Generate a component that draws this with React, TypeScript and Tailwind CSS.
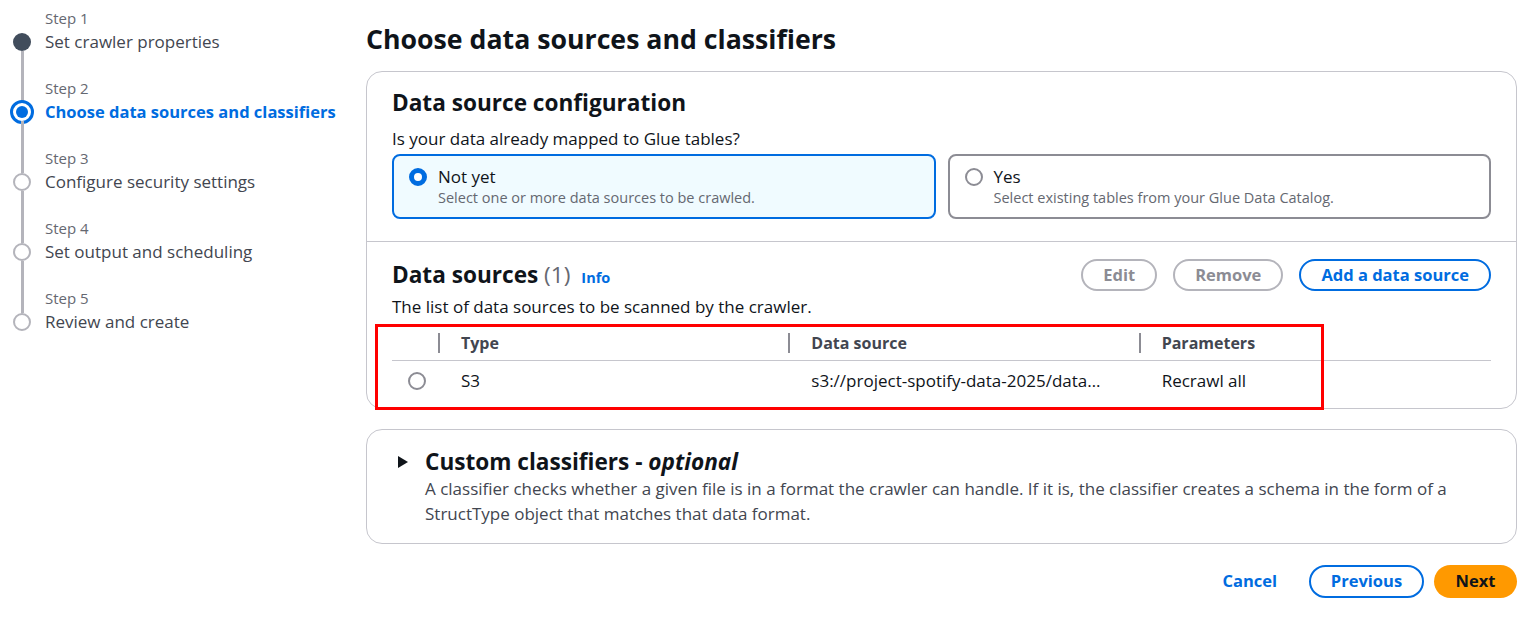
import React from "react";

const STEPS = [
  { label: "Step 1", title: "Set crawler properties", state: "done" },
  { label: "Step 2", title: "Choose data sources and classifiers", state: "active" },
  { label: "Step 3", title: "Configure security settings", state: "todo" },
  { label: "Step 4", title: "Set output and scheduling", state: "todo" },
  { label: "Step 5", title: "Review and create", state: "todo" },
];

function StepDot({ state }: { state: string }) {
  if (state === "done") return <div className="h-[18px] w-[18px] shrink-0 rounded-full bg-[#414d5c]" />;
  if (state === "active")
    return (
      <div className="flex h-6 w-6 shrink-0 items-center justify-center rounded-full border-[3px] border-[#006ce0] bg-white">
        <div className="h-3 w-3 rounded-full bg-[#006ce0]" />
      </div>
    );
  return <div className="h-[18px] w-[18px] shrink-0 rounded-full border-2 border-[#b4b4bb] bg-white" />;
}

function Nav() {
  return (
    <nav className="w-[366px] shrink-0 pl-[13px] pt-2">
      {STEPS.map((s, i) => (
        <div key={s.label} className="flex">
          <div className="flex w-[18px] shrink-0 flex-col items-center">
            <div className={`h-[25px] w-[3px] ${i === 0 ? "" : "bg-[#b4b4bb]"}`} />
            <div className="flex h-[18px] w-[18px] items-center justify-center">
              <StepDot state={s.state} />
            </div>
            <div className={`w-[3px] flex-1 ${i === STEPS.length - 1 ? "" : "bg-[#b4b4bb]"}`} />
          </div>
          <div className="pb-6 pl-[14px]">
            <div className="text-[15px] leading-5 text-[#656871]">{s.label}</div>
            <div
              className={`mt-[2px] leading-6 ${
                s.state === "active"
                  ? "text-[16.5px] font-bold text-[#006ce0]"
                  : "text-[17px] text-[#424650]"
              }`}
            >
              {s.title}
            </div>
          </div>
        </div>
      ))}
    </nav>
  );
}

function Radio({ checked }: { checked?: boolean }) {
  return checked ? (
    <div className="h-[18px] w-[18px] shrink-0 rounded-full border-[5px] border-[#006ce0] bg-white" />
  ) : (
    <div className="h-[18px] w-[18px] shrink-0 rounded-full border-2 border-[#8c8c94] bg-white" />
  );
}

function Tile({ checked, label, desc }: { checked?: boolean; label: string; desc: string }) {
  return (
    <div
      className={`flex gap-[11px] rounded-lg border-2 pb-[9px] pl-[15px] pr-4 pt-[10px] ${
        checked ? "border-[#006ce0] bg-[#f0fbff]" : "border-[#8c8c94] bg-white"
      }`}
    >
      <div className="pt-[2px]">
        <Radio checked={checked} />
      </div>
      <div>
        <div className="text-[17px] leading-[22px] text-[#0f141a]">{label}</div>
        <div className="text-[14.5px] leading-5 text-[#656871]">{desc}</div>
      </div>
    </div>
  );
}

function PillButton({ children, variant }: { children: React.ReactNode; variant: "disabled" | "normal" }) {
  return (
    <button
      className={`h-8 rounded-full border-2 px-5 text-[16.5px] font-bold leading-none ${
        variant === "disabled"
          ? "border-[#b4b4bb] text-[#8c8c94]"
          : "border-[#006ce0] text-[#006ce0]"
      }`}
    >
      {children}
    </button>
  );
}

export default function App() {
  return (
    <div
      className="min-h-screen bg-white text-[#0f141a]"
      style={{ fontFamily: "'Open Sans', 'Noto Sans', sans-serif" }}
    >
      <div className="flex">
        <Nav />

        <main className="flex-1 pr-4 pt-[21px]">
          <h1 className="text-[26.7px] font-bold leading-9 text-[#0f141a]">
            Choose data sources and classifiers
          </h1>

          <div className="relative mt-[14px] rounded-2xl border border-[#c6c6cd] bg-white">
            <div className="px-[25px] pb-[22px] pt-[17px]">
              <h2 className="text-[22.6px] font-bold leading-7">Data source configuration</h2>
              <p className="mt-[11px] text-[17px] leading-[22px]">Is your data already mapped to Glue tables?</p>
              <div className="mt-1 grid grid-cols-2 gap-3">
                <Tile checked label="Not yet" desc="Select one or more data sources to be crawled." />
                <Tile label="Yes" desc="Select existing tables from your Glue Data Catalog." />
              </div>
            </div>

            <div className="border-t border-[#c6c6cd] px-[25px] pb-[7px] pt-[17px]">
              <div className="flex items-center justify-between">
                <div className="flex items-baseline gap-[11px]">
                  <h2 className="text-[22.6px] font-bold leading-7">
                    Data sources <span className="font-normal text-[#656871]">(1)</span>
                  </h2>
                  <span className="text-[14.5px] font-bold text-[#006ce0]">Info</span>
                </div>
                <div className="flex gap-4">
                  <PillButton variant="disabled">Edit</PillButton>
                  <PillButton variant="disabled">Remove</PillButton>
                  <PillButton variant="normal">Add a data source</PillButton>
                </div>
              </div>
              <p className="mt-[5px] text-[17px] leading-[22px]">
                The list of data sources to be scanned by the crawler.
              </p>

              <div className="mt-[7px]">
                <div className="grid h-9 grid-cols-[48px_1fr_1fr_1fr] items-center border-b border-[#c6c6cd] text-[16px] font-bold text-[#424650]">
                  <div className="flex h-5 justify-end">
                    <div className="w-[2px] bg-[#8c8c94]" />
                  </div>
                  <div className="flex h-full items-center justify-between">
                    <span className="pl-[21px]">Type</span>
                    <div className="h-5 w-[2px] bg-[#8c8c94]" />
                  </div>
                  <div className="flex h-full items-center justify-between">
                    <span className="pl-[21px]">Data source</span>
                    <div className="h-5 w-[2px] bg-[#8c8c94]" />
                  </div>
                  <div className="pl-[21px]">Parameters</div>
                </div>
                <div className="grid h-10 grid-cols-[48px_1fr_1fr_1fr] items-center text-[17px]">
                  <div className="flex pl-4">
                    <Radio />
                  </div>
                  <div className="pl-[21px]">S3</div>
                  <div className="truncate pl-[21px] pr-5">s3://project-spotify-data-2025/data…</div>
                  <div className="pl-[21px]">Recrawl all</div>
                </div>
              </div>
            </div>

            {/* annotation box drawn over the table */}
            <div className="pointer-events-none absolute left-[8px] top-[252px] h-[86px] w-[949px] border-[3px] border-[#ff0000]" />
          </div>

          <div className="mt-[20px] rounded-2xl border border-[#c6c6cd] bg-white pb-[17px] pl-[30px] pr-[25px] pt-[18px]">
            <div className="flex items-center gap-4">
              <svg width="12" height="14" viewBox="0 0 12 14" className="shrink-0">
                <path d="M1 1 L11 7 L1 13 Z" fill="#0f141a" />
              </svg>
              <h2 className="text-[22.6px] font-bold leading-7">
                Custom classifiers - <i className="font-bold">optional</i>
              </h2>
            </div>
            <p className="pl-7 text-[17px] leading-[25px] text-[#424650]">
              A classifier checks whether a given file is in a format the crawler can handle. If it is, the classifier
              creates a schema in the form of a StructType object that matches that data format.
            </p>
          </div>

          <div className="mt-[21px] flex items-center justify-end gap-[10px]">
            <button className="mr-[6px] h-[33px] px-4 text-[16.5px] font-bold text-[#006ce0]">Cancel</button>
            <button className="h-[33px] w-[115px] rounded-full border-2 border-[#006ce0] text-[16.5px] font-bold text-[#006ce0]">
              Previous
            </button>
            <button className="h-[33px] w-[83px] rounded-full bg-[#ff9900] text-[16.5px] font-bold text-[#0f141a]">
              Next
            </button>
          </div>
        </main>
      </div>
    </div>
  );
}
